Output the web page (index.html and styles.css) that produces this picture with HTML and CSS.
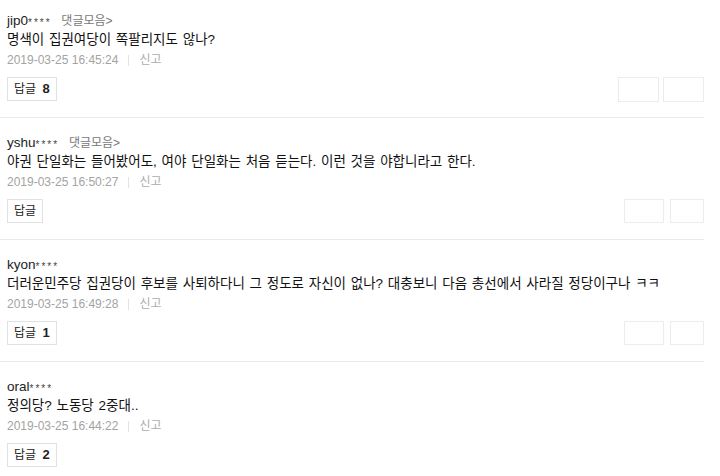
FILE: index.html
```html
<!DOCTYPE html>
<html lang="ko">
<head>
  <meta charset="UTF-8">
  <title>댓글</title>
  <link rel="stylesheet" href="styles.css">
</head>
<body>
  <ul class="comments">
    <li class="comment first">
      <div class="writer">jip0<span class="mask">****</span> <a class="more">댓글모음&gt;</a></div>
      <p class="text">명색이 집권여당이 쪽팔리지도 않나?</p>
      <div class="info"><span class="date">2019-03-25 16:45:24</span><span class="bar"></span><a class="report">신고</a></div>
      <div class="actions">
        <button class="reply">답글 <b>8</b></button>
        <div class="votes wide"><span></span><span></span></div>
      </div>
    </li>
    <li class="comment">
      <div class="writer">yshu<span class="mask">****</span> <a class="more">댓글모음&gt;</a></div>
      <p class="text">야권 단일화는 들어봤어도, 여야 단일화는 처음 듣는다. 이런 것을 야합니라고 한다.</p>
      <div class="info"><span class="date">2019-03-25 16:50:27</span><span class="bar"></span><a class="report">신고</a></div>
      <div class="actions">
        <button class="reply">답글</button>
        <div class="votes"><span></span><span></span></div>
      </div>
    </li>
    <li class="comment">
      <div class="writer">kyon<span class="mask">****</span></div>
      <p class="text">더러운민주당 집권당이 후보를 사퇴하다니 그 정도로 자신이 없나? 대충보니 다음 총선에서 사라질 정당이구나 ㅋㅋ</p>
      <div class="info"><span class="date">2019-03-25 16:49:28</span><span class="bar"></span><a class="report">신고</a></div>
      <div class="actions">
        <button class="reply">답글 <b>1</b></button>
        <div class="votes"><span></span><span></span></div>
      </div>
    </li>
    <li class="comment">
      <div class="writer">oral<span class="mask">****</span></div>
      <p class="text">정의당? 노동당 2중대..</p>
      <div class="info"><span class="date">2019-03-25 16:44:22</span><span class="bar"></span><a class="report">신고</a></div>
      <div class="actions">
        <button class="reply">답글 <b>2</b></button>
      </div>
    </li>
  </ul>
</body>
</html>
```

FILE: styles.css
```css
body {
  margin: 0;
  background-color: #fff;
  color: #1e1e1e;
  font-family: "Liberation Sans", "Noto Sans CJK KR", sans-serif;
  font-size: 13px;
}

.comments {
  list-style: none;
  margin: 0;
  padding: 0;
  width: 704px;
}

.comment {
  padding: 17px 0 16px 7px;
  border-bottom: 1px solid #ebebeb;
}

.comment.first {
  padding-top: 13px;
}

.writer {
  line-height: 16px;
  height: 16px;
  color: #222;
  font-size: 13.5px;
}

.mask {
  font-size: 10px;
  letter-spacing: 2px;
  vertical-align: -1px;
  color: #444;
}

.more {
  margin-left: 6px;
  font-size: 12px;
  color: #777;
}

.text {
  margin: 2px 0 0;
  line-height: 18px;
  font-size: 13.5px;
  word-spacing: 1px;
  color: #111;
}

.info {
  margin-top: 2px;
  line-height: 18px;
  display: flex;
  align-items: center;
  font-size: 12px;
}

.date {
  color: #a3a3a3;
}

.bar {
  width: 1px;
  height: 11px;
  background-color: #e3e3e3;
  margin: 0 10px 0 10px;
}

.report {
  color: #adadad;
}

.actions {
  margin-top: 8px;
  display: flex;
  justify-content: space-between;
  align-items: center;
  height: 24px;
}

.reply {
  height: 24px;
  padding: 0 6px;
  border: 1px solid #e1e1e1;
  background-color: #fff;
  color: #222;
  font-family: "Liberation Sans", "Noto Sans CJK KR", sans-serif;
  font-size: 12px;
  line-height: 22px;
}

.reply b {
  margin-left: 3px;
  font-size: 13px;
}

.votes {
  display: flex;
  gap: 6px;
}

.votes span {
  width: 38px;
  height: 22px;
  border: 1px solid #ececec;
}

.votes span + span {
  width: 32px;
}

.votes.wide {
  gap: 4px;
}

.votes.wide span {
  width: 39px;
  height: 23px;
}
```
